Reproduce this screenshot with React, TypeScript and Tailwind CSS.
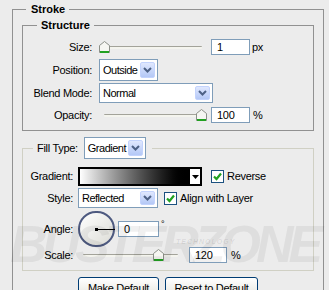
import React from 'react'

function Chevron() {
  return (
    <svg width="9" height="6" viewBox="0 0 9 6">
      <path d="M1 1l3.5 3.5L8 1" fill="none" stroke="#4d6185" strokeWidth="2" />
    </svg>
  )
}

function Combo({ value, className }: { value: string; className: string }) {
  return (
    <div className={`flex items-stretch border border-[#7f9db9] bg-white p-[2px] ${className}`}>
      <span className="flex flex-1 items-center overflow-hidden pl-[1px] text-[11px] leading-none tracking-[-0.5px] whitespace-nowrap text-black">{value}</span>
      <span className="flex w-[15px] shrink-0 items-center justify-center rounded-[2px] border border-[#c3d3fd] bg-gradient-to-b from-[#e0e8fe] to-[#b4c8f6]">
        <Chevron />
      </span>
    </div>
  )
}

function TextBox({ value, className }: { value: string; className: string }) {
  return (
    <div className={`flex h-[16px] items-center border border-[#7f9db9] bg-white pl-[5px] text-[11px] leading-none text-black ${className}`}>
      {value}
    </div>
  )
}

function Thumb() {
  return (
    <svg width="11" height="13" viewBox="0 0 11 13">
      <path d="M0.5 4.5L5.5 0.5L10.5 4.5V11.5H0.5Z" fill="#f6f6f2" stroke="#8c9089" />
      <rect x="1" y="10" width="9" height="2" fill="#21a121" />
    </svg>
  )
}

function Slider({ className, at }: { className: string; at: number }) {
  return (
    <div className={`relative h-[13px] ${className}`}>
      <div className="absolute top-[5px] right-[5px] left-[5px] h-[3px] rounded-[1px] border-t border-[#a3a39a] bg-[#f4f4ee]" />
      <div className="absolute top-0" style={{ left: at }}>
        <Thumb />
      </div>
    </div>
  )
}

function Check({ label }: { label: string }) {
  return (
    <div className="flex items-center gap-[3px]">
      <span className="flex h-[13px] w-[13px] items-center justify-center border border-[#1c5180] bg-white">
        <svg width="9" height="9" viewBox="0 0 9 9">
          <path d="M1 4.5l2.5 2.5L8 1.5" fill="none" stroke="#21a121" strokeWidth="2.2" />
        </svg>
      </span>
      <span className="text-[11px] text-black">{label}</span>
    </div>
  )
}

function XpButton({ label, className }: { label: string; className: string }) {
  return (
    <div className={`flex h-[23px] items-center justify-center rounded-[3px] border border-[#003c74] bg-gradient-to-b from-[#ffffff] to-[#e3e2da] text-[11px] text-black ${className}`}>
      {label}
    </div>
  )
}

export default function App() {
  return (
    <div className="relative h-[290px] w-[329px] overflow-hidden bg-[#ececec] font-['Liberation_Sans',Arial,sans-serif] text-[11px] tracking-[-0.3px] text-black">
      <fieldset className="ml-[12px] mt-[3px] h-[320px] w-[312px] border border-[#919191]">
        <legend className="ml-[13px] pr-[4px] pl-[5px] text-[11px] leading-[13px] font-bold tracking-normal">Stroke</legend>

        <fieldset className="mt-[3px] ml-[9px] w-[292px] border border-[#919191] pt-[7px] pb-[7px]">
          <legend className="ml-[14px] px-[4px] text-[11px] leading-[13px] font-bold tracking-normal">Structure</legend>

          <div className="flex h-[16px] items-center">
            <span className="w-[69px] text-right">Size:</span>
            <Slider className="ml-[7px] w-[108px]" at={0} />
            <TextBox value="1" className="ml-[4px] w-[39px]" />
            <span className="ml-[2px]">px</span>
          </div>

          <div className="mt-[4px] flex items-center">
            <span className="w-[69px] text-right">Position:</span>
            <Combo value="Outside" className="ml-[7px] h-[22px] w-[59px]" />
          </div>

          <div className="mt-[2px] flex items-center">
            <span className="w-[69px] text-right">Blend Mode:</span>
            <Combo value="Normal" className="ml-[7px] h-[20px] w-[114px]" />
          </div>

          <div className="mt-[4px] flex h-[16px] items-center">
            <span className="w-[69px] text-right">Opacity:</span>
            <Slider className="ml-[7px] w-[108px]" at={97} />
            <TextBox value="100" className="ml-[4px] w-[39px]" />
            <span className="ml-[3px]">%</span>
          </div>
        </fieldset>

        <fieldset className="mt-[6px] ml-[9px] w-[292px] border border-[#d0d0c4] pt-[8px] pb-[7px]">
          <legend className="ml-[10px] flex items-center pr-[6px] pl-[4px]">
            <span>Fill Type:</span>
            <Combo value="Gradient" className="ml-[6px] h-[22px] w-[62px]" />
          </legend>

          <div className="flex items-center">
            <span className="w-[50px] text-right">Gradient:</span>
            <div className="ml-[5px] flex h-[19px] w-[124px] border-2 border-black">
              <div className="flex-1 bg-gradient-to-r from-[#ffffff] to-[#000000]" />
              <div className="flex w-[12px] items-center justify-center border-l-2 border-black bg-white">
                <svg width="7" height="4" viewBox="0 0 7 4">
                  <path d="M0 0h7L3.5 4Z" fill="#000" />
                </svg>
              </div>
            </div>
            <div className="ml-[9px]">
              <Check label="Reverse" />
            </div>
          </div>

          <div className="mt-[2px] flex items-center">
            <span className="w-[50px] text-right">Style:</span>
            <Combo value="Reflected" className="ml-[5px] h-[20px] w-[80px]" />
            <div className="ml-[6px]">
              <Check label="Align with Layer" />
            </div>
          </div>

          <div className="mt-[3px] flex items-center">
            <span className="w-[50px] text-right">Angle:</span>
            <div className="relative ml-[5px] h-[36px] w-[37px] rounded-full border-2 border-[#4e5a80] bg-gradient-to-br from-[#ffffff] to-[#dcdcd6]">
              <div className="absolute top-[16px] left-[16px] h-[1px] w-[19px] bg-black" />
              <div className="absolute top-[15px] left-[15px] h-[3px] w-[3px] bg-black" />
            </div>
            <TextBox value="0" className="ml-[3px] w-[41px]" />
            <span className="mb-[10px] ml-[2px] text-[9px] leading-none">°</span>
          </div>

          <div className="flex h-[16px] items-center">
            <span className="w-[50px] text-right">Scale:</span>
            <Slider className="ml-[5px] w-[105px]" at={75} />
            <TextBox value="120" className="ml-[6px] w-[38px]" />
            <span className="ml-[4px]">%</span>
          </div>
        </fieldset>

        <div className="mt-[6px] ml-[65px] flex gap-[6px]">
          <XpButton label="Make Default" className="w-[81px]" />
          <XpButton label="Reset to Default" className="w-[93px]" />
        </div>
      </fieldset>

      <div className="pointer-events-none absolute top-[218px] left-[10px] text-[52px] leading-none font-bold tracking-[-5px] whitespace-nowrap text-[rgba(0,0,0,0.06)] italic">
        BUSTERZONE
      </div>
      <div className="pointer-events-none absolute top-[238px] left-[176px] text-[7px] leading-none font-bold tracking-[1px] whitespace-nowrap text-[rgba(0,0,0,0.09)] italic">
        TECHNOLOGY
      </div>
    </div>
  )
}
